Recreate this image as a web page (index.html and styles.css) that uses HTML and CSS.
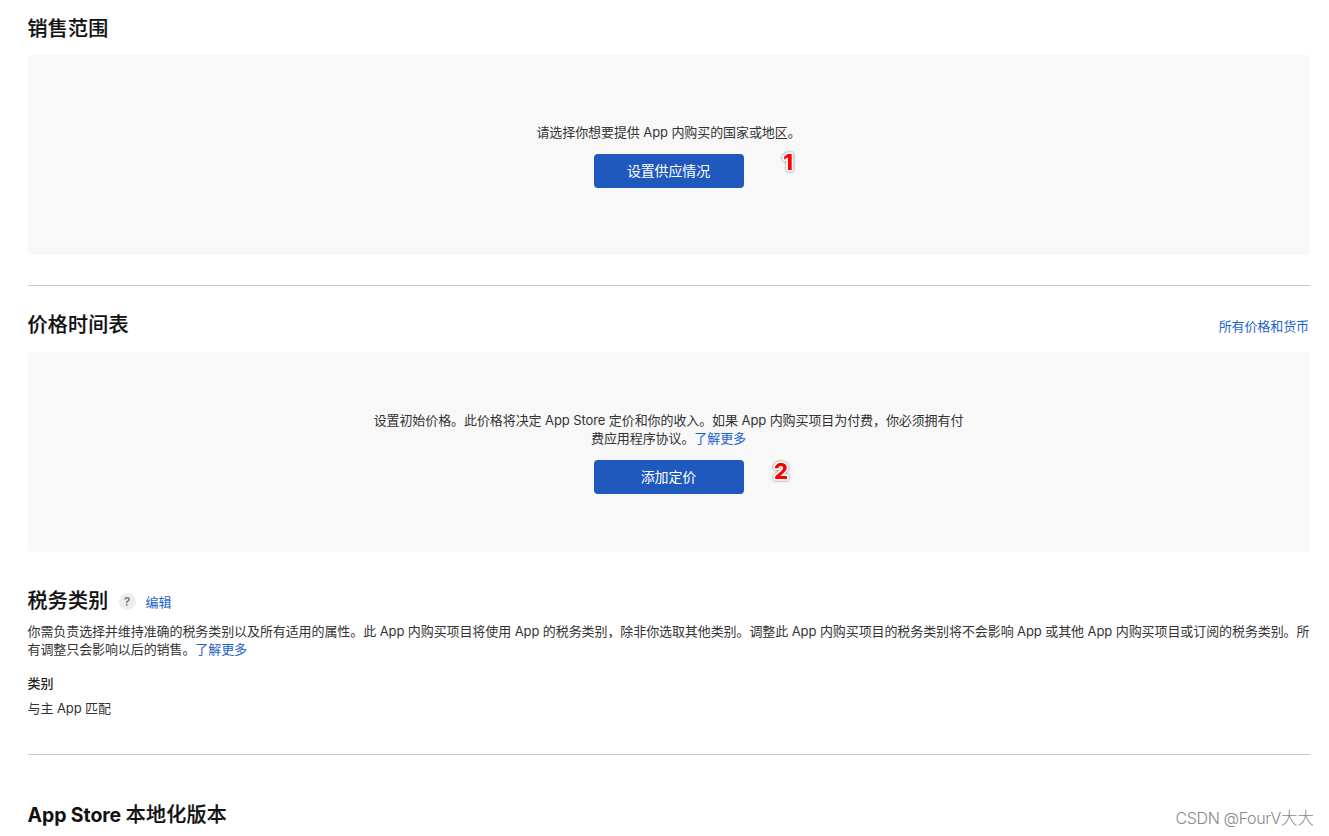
FILE: index.html
```
<!DOCTYPE html>
<html lang="zh-CN">
<head>
<meta charset="utf-8">
<title>App 内购买项目</title>
<link rel="stylesheet" href="styles.css">
</head>
<body>
<main class="page">
  <section class="availability">
    <h2 class="title">销售范围</h2>
    <div class="panel">
      <p class="prompt">请选择你想要提供 App 内购买的国家或地区。</p>
      <button class="button">设置供应情况</button>
      <svg class="marker marker-one" viewBox="0 0 24 32"><text x="12" y="24" text-anchor="middle">1</text></svg>
    </div>
  </section>
  <hr class="rule">
  <section class="pricing">
    <div class="heading-row">
      <h2 class="title">价格时间表</h2>
      <a class="link all-prices">所有价格和货币</a>
    </div>
    <div class="panel">
      <p class="prompt">设置初始价格。此价格将决定 App Store 定价和你的收入。如果 App 内购买项目为付费，你必须拥有付<br>费应用程序协议。<a class="link">了解更多</a></p>
      <button class="button">添加定价</button>
      <svg class="marker marker-two" viewBox="0 0 24 32"><text x="12" y="24" text-anchor="middle">2</text></svg>
    </div>
  </section>
  <section class="tax">
    <div class="tax-heading">
      <h2 class="title">税务类别</h2>
      <span class="help">?</span>
      <a class="link edit">编辑</a>
    </div>
    <p class="description">你需负责选择并维持准确的税务类别以及所有适用的属性。此 App 内购买项目将使用 App 的税务类别，除非你选取其他类别。调整此 App 内购买项目的税务类别将不会影响 App 或其他 App 内购买项目或订阅的税务类别。所<br>有调整只会影响以后的销售。<a class="link">了解更多</a></p>
    <h3 class="label">类别</h3>
    <p class="value">与主 App 匹配</p>
  </section>
  <hr class="rule">
  <section class="localization">
    <h2 class="title"><span class="latin">App Store </span>本地化版本</h2>
  </section>
</main>
<div class="watermark">CSDN @FourV<span class="watermark-cjk">大大</span></div>
</body>
</html>
```

FILE: styles.css
```
* { box-sizing: border-box; }
body {
  margin: 0;
  height: 836px;
  overflow: hidden;
  background: #fff;
  color: #333;
  font: 13px/18px Inter, "Noto Sans CJK SC", sans-serif;
  letter-spacing: -0.09px;
}
h2, h3, p { margin: 0; }
.page { padding: 14px 19px 0 27.5px; }
.title {
  color: #111;
  font-size: 20px;
  font-weight: 500;
  line-height: 30px;
  letter-spacing: 0.25px;
  white-space: nowrap;
  -webkit-text-stroke: 0.2px #111;
}
.latin { font-size: 19.5px; font-weight: 700; letter-spacing: -0.1px; -webkit-text-stroke: 0; }
.panel {
  position: relative;
  display: flex;
  flex-direction: column;
  align-items: center;
  justify-content: center;
  gap: 13px;
  height: 200px;
  margin: 11px 0 0 0.5px;
  padding-top: 1px;
  border-radius: 4px;
  background: #f8f8f8;
}
.prompt { padding-right: 1px; text-align: center; white-space: nowrap; }
.link { color: #1d62c9; }
.button {
  width: 150px;
  height: 34px;
  padding: 0 1px 0 0;
  border: 0;
  border-radius: 4px;
  background: #1f59bd;
  color: #fff;
  font: 14px/34px Inter, "Noto Sans CJK SC", sans-serif;
  letter-spacing: -0.13px;
}
.marker {
  position: absolute;
  width: 24px;
  height: 32px;
  overflow: visible;
  fill: #f00;
  stroke: #fff;
  stroke-width: 3.5px;
  stroke-linejoin: round;
  paint-order: stroke;
  font: 800 22px Inter, "Liberation Sans", sans-serif;
  filter: drop-shadow(0 0 1px #666);
}
.marker-one { left: 748px; top: 91px; }
.marker-two { left: 741px; top: 103px; }
.rule { height: 1px; margin: 30px 0 0 0.5px; border: 0; background: #c8c8cb; }
.pricing { padding-top: 24px; }
.heading-row { display: flex; justify-content: space-between; }
.all-prices { padding: 7px 0 0; margin-right: 1px; }
.pricing .panel { margin-top: 12px; }
.tax { padding-top: 34px; }
.tax-heading { display: flex; align-items: center; }
.help {
  width: 17px;
  height: 17px;
  margin: 1px 10px 0 10px;
  border-radius: 50%;
  background: #eee;
  color: #777;
  font-size: 12px;
  font-weight: 600;
  line-height: 17px;
  text-align: center;
}
.edit { padding-top: 2px; }
.description { margin-top: 6px; white-space: nowrap; }
.label { margin-top: 16px; font-size: 13px; font-weight: 500; line-height: 18px; color: #222; }
.value { margin-top: 7px; }
.tax + .rule { margin-top: 37px; }
.localization { padding-top: 45px; }
.watermark {
  position: absolute;
  left: 1175.5px;
  top: 807px;
  color: #888;
  font: 300 16px/22px Inter, "Noto Sans CJK SC", sans-serif;
  letter-spacing: -0.38px;
  white-space: nowrap;
}
.watermark-cjk { font-size: 16.5px; letter-spacing: 0; }
```
